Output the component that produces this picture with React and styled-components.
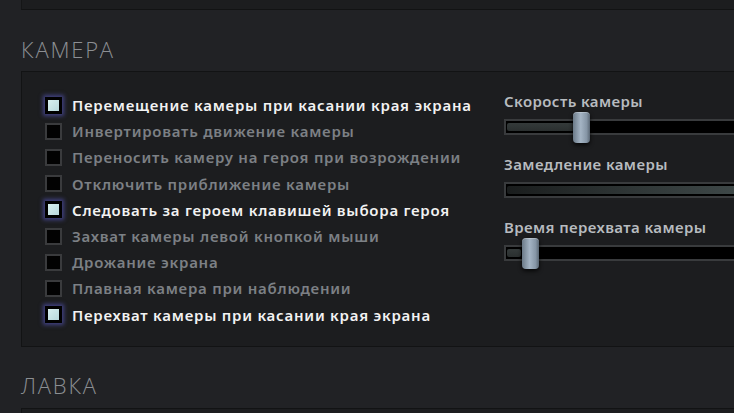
import React from "react";
import styled, { createGlobalStyle } from "styled-components";

const Global = createGlobalStyle`
  html, body { margin: 0; padding: 0; background: #202124; overflow: hidden; }
  #root { width: 734px; height: 413px; overflow: hidden; }
`;

const Page = styled.div`
  width: 734px;
  height: 413px;
  background: #212225;
  display: flex;
  flex-direction: column;
  overflow: hidden;
  font-family: "Noto Sans", "DejaVu Sans", sans-serif;
`;

const PanelStub = styled.div`
  margin-left: 21px;
  height: 9px;
  flex: none;
  background: #1c1d1f;
  border-left: 1px solid #151617;
  border-bottom: 1px solid #121314;
`;

const SectionTitle = styled.div`
  flex: none;
  height: ${(p) => p.$h}px;
  box-sizing: border-box;
  padding-left: 21px;
  padding-top: ${(p) => p.$top}px;
  font-family: "Open Sans", "Lato", sans-serif;
  font-weight: 300;
  font-size: 22px;
  line-height: 24px;
  letter-spacing: 1.8px;
  color: #8c8f93;
`;

const Panel = styled.div`
  flex: none;
  margin-left: 21px;
  height: ${(p) => p.$h}px;
  box-sizing: border-box;
  background: #1c1d1f;
  border: 1px solid #121314;
  border-right: none;
  display: grid;
  grid-template-columns: 482px 1fr;
  overflow: hidden;
`;

const LeftCol = styled.div`
  padding: 20px 0 0 23px;
  display: grid;
  grid-auto-rows: 26.2px;
  align-content: start;
`;

const Row = styled.div`
  display: flex;
  align-items: center;
  gap: 10px;
`;

const Box = styled.div`
  flex: none;
  width: 17px;
  height: 17px;
  box-sizing: border-box;
  border: ${(p) => (p.$on ? "3px solid #000" : "2px solid #3a3b3d")};
  background: ${(p) =>
    p.$on ? "linear-gradient(135deg, #d8f0f0, #b8d8dc)" : "#020202"};
  box-shadow: ${(p) =>
    p.$on ? "0 0 4px 2px rgba(95, 95, 210, 0.55)" : "none"};
`;

const Label = styled.span`
  font-size: 15px;
  line-height: 20px;
  font-weight: 600;
  letter-spacing: 0.75px;
  white-space: nowrap;
  color: ${(p) => (p.$on ? "#f2f2f2" : "#7c8085")};
`;

const RightCol = styled.div`
  padding-top: 20px;
  display: flex;
  flex-direction: column;
  gap: 20px;
`;

const SliderGroup = styled.div`
  display: flex;
  flex-direction: column;
  gap: 9px;
`;

const SliderLabel = styled.div`
  font-size: 15px;
  font-weight: 600;
  letter-spacing: 0.4px;
  white-space: nowrap;
  color: #b7bbbf;
  line-height: 18px;
`;

const Track = styled.div`
  position: relative;
  width: 320px;
  height: 16px;
  box-sizing: border-box;
  border: 2px solid #393b3d;
  background: #000;
`;

const Fill = styled.div`
  position: absolute;
  left: 1px;
  top: 2px;
  bottom: 2px;
  background: ${(p) =>
    p.$full
      ? "linear-gradient(90deg, #1a1d1d, #2f3636 40%, #4a5656)"
      : "linear-gradient(180deg, #343a3a, #2a2f2f)"};
  border-radius: 2px;
`;

const Handle = styled.div`
  position: absolute;
  top: -9px;
  width: 17px;
  height: 31px;
  border-radius: 4px;
  background: linear-gradient(90deg, #6b7a88, #a4b4c4 45%, #8696a6 80%, #5a6774);
  box-shadow: 0 2px 4px rgba(0, 0, 0, 0.8), inset 0 1px 0 rgba(255,255,255,0.25);
`;

const options = [
  ["Перемещение камеры при касании края экрана", true],
  ["Инвертировать движение камеры", false],
  ["Переносить камеру на героя при возрождении", false],
  ["Отключить приближение камеры", false],
  ["Следовать за героем клавишей выбора героя", true],
  ["Захват камеры левой кнопкой мыши", false],
  ["Дрожание экрана", false],
  ["Плавная камера при наблюдении", false],
  ["Перехват камеры при касании края экрана", true],
];

const sliders = [
  { label: "Скорость камеры", fill: 67, handle: 67 },
  { label: "Замедление камеры", fill: 316, full: true },
  { label: "Время перехвата камеры", fill: 14, handle: 16 },
];

export default function App() {
  return (
    <Page>
      <Global />
      <PanelStub />
      <SectionTitle $h={61} $top={27}>КАМЕРА</SectionTitle>
      <Panel $h={276}>
        <LeftCol>
          {options.map(([t, on]) => (
            <Row key={t}>
              <Box $on={on} />
              <Label $on={on}>{t}</Label>
            </Row>
          ))}
        </LeftCol>
        <RightCol>
          {sliders.map((s) => (
            <SliderGroup key={s.label}>
              <SliderLabel>{s.label}</SliderLabel>
              <Track>
                <Fill $full={s.full} style={{ width: s.fill }} />
                {s.handle !== undefined && <Handle style={{ left: s.handle }} />}
              </Track>
            </SliderGroup>
          ))}
        </RightCol>
      </Panel>
      <SectionTitle $h={61} $top={26}>ЛАВКА</SectionTitle>
      <Panel $h={40} />
    </Page>
  );
}
